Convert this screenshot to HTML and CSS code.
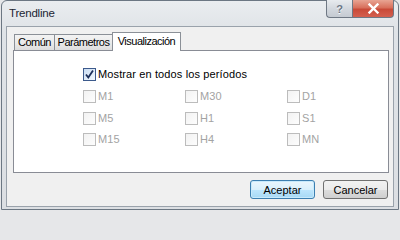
FILE: index.html
```html
<!DOCTYPE html>
<html lang="es">
<head>
<meta charset="utf-8">
<title>Trendline</title>
<link rel="stylesheet" href="styles.css">
</head>
<body>
<div class="window">
  <div class="titlebar">
    <span class="title">Trendline</span>
    <div class="caption-btns">
      <div class="cap-btn help">?</div>
      <div class="cap-btn close">
        <svg width="13" height="11" viewBox="0 0 13 11"><path d="M2.5 1.5 L10.5 9.5 M10.5 1.5 L2.5 9.5" stroke="#ffffff" stroke-width="2.4" stroke-linecap="square" fill="none"/></svg>
      </div>
    </div>
  </div>
  <div class="client">
    <div class="tabs">
      <div class="tab tab-comun">Común</div>
      <div class="tab tab-params">Parámetros</div>
      <div class="tab tab-active">Visualización</div>
    </div>
    <div class="panel">
      <label class="check-row">
        <span class="box checked">
          <svg width="11" height="11" viewBox="0 0 11 11"><path d="M2 5.5 L4.3 8.5 L9 1.5" stroke="#1c2f5a" stroke-width="1.8" fill="none"/></svg>
        </span>
        <span class="label">Mostrar en todos los períodos</span>
      </label>
      <div class="grid">
        <div class="check-row disabled"><span class="box"></span><span class="label">M1</span></div>
        <div class="check-row disabled"><span class="box"></span><span class="label">M30</span></div>
        <div class="check-row disabled"><span class="box"></span><span class="label">D1</span></div>
        <div class="check-row disabled"><span class="box"></span><span class="label">M5</span></div>
        <div class="check-row disabled"><span class="box"></span><span class="label">H1</span></div>
        <div class="check-row disabled"><span class="box"></span><span class="label">S1</span></div>
        <div class="check-row disabled"><span class="box"></span><span class="label">M15</span></div>
        <div class="check-row disabled"><span class="box"></span><span class="label">H4</span></div>
        <div class="check-row disabled"><span class="box"></span><span class="label">MN</span></div>
      </div>
    </div>
    <div class="buttons">
      <button class="btn btn-default">Aceptar</button>
      <button class="btn">Cancelar</button>
    </div>
  </div>
</div>
</body>
</html>
```

FILE: styles.css
```css
html, body {
  margin: 0;
  padding: 0;
  background: #e6e7e9;
}
body {
  width: 400px;
  height: 211px;
  font-family: "Liberation Sans", Arial, sans-serif;
  font-size: 11px;
  color: #000;
  overflow: hidden;
}
.window {
  box-sizing: border-box;
  width: 398px;
  height: 210px;
  margin-left: 1px;
  border: 1px solid #6c7783;
  border-radius: 6px 6px 0 0;
  background: linear-gradient(#eaedf0, #dfe3e7 30px, #dcdfe3);
  padding: 0 4px 2px 4px;
  display: flex;
  flex-direction: column;
}
.titlebar {
  height: 25px;
  display: flex;
  align-items: flex-start;
  justify-content: space-between;
}
.title {
  font-size: 11.5px;
  letter-spacing: -0.2px;
  color: #1b2533;
  margin-top: 6px;
  margin-left: 3px;
}
.caption-btns {
  display: flex;
  margin-top: -1px;
}
.cap-btn {
  box-sizing: border-box;
  height: 18px;
  border: 1px solid #6f7884;
  border-top: none;
  display: flex;
  align-items: center;
  justify-content: center;
}
.help {
  width: 26px;
  border-radius: 0 0 0 4px;
  border-right: none;
  background: linear-gradient(#e8ebee, #d3d8de 50%, #c5cbd2);
  color: #6a7584;
  font-weight: bold;
  font-size: 11px;
  text-shadow: 0 1px 0 #fff;
}
.close {
  width: 42px;
  border-radius: 0 0 4px 0;
  background: linear-gradient(#e8a493, #d8705c 45%, #c94a38 55%, #d4604f);
}
.client {
  box-sizing: border-box;
  height: 181px;
  border: 1px solid #9aa2ab;
  background: #f0f0f0;
  padding: 5px 4px 0 0;
  display: flex;
  flex-direction: column;
}
.tabs {
  display: flex;
  align-items: flex-end;
  height: 18px;
  margin-left: 7px;
  position: relative;
  z-index: 2;
}
.tab {
  box-sizing: border-box;
  height: 16px;
  border: 1px solid #8b9097;
  border-bottom: none;
  background: linear-gradient(#f3f3f3, #ebebeb 50%, #dddddd);
  line-height: 15px;
  letter-spacing: -0.5px;
  text-align: center;
  white-space: nowrap;
}
.tab + .tab {
  margin-left: -1px;
}
.tab-comun {
  width: 41px;
}
.tab-params {
  width: 59px;
}
.tab-active {
  width: 69px;
  height: 19px;
  margin-left: -2px;
  margin-bottom: -1px;
  background: #ffffff;
  line-height: 17px;
}
.panel {
  box-sizing: border-box;
  margin-left: 6px;
  width: 376px;
  height: 123px;
  border: 1px solid #898c95;
  background: #ffffff;
  padding: 17px 0 0 69px;
  position: relative;
  z-index: 1;
}
.check-row {
  display: flex;
  align-items: center;
  height: 13px;
}
.box {
  box-sizing: border-box;
  width: 13px;
  height: 13px;
  border: 1px solid #bcbcbc;
  background: linear-gradient(135deg, #f2f2f2, #fdfdfd);
  display: flex;
  align-items: center;
  justify-content: center;
  flex: none;
}
.box.checked {
  border-color: #3c5a8c;
  background: linear-gradient(135deg, #c9ddf3, #f3f8fd);
}
.label {
  margin-left: 2px;
  line-height: 13px;
  letter-spacing: 0.12px;
}
.disabled .label {
  color: #a3a3a3;
}
.grid {
  margin-top: 9px;
  display: grid;
  grid-template-columns: 102px 102px 102px;
  grid-auto-rows: 13px;
  row-gap: 8.5px;
}
.buttons {
  display: flex;
  justify-content: flex-end;
  gap: 8px;
  margin-top: 7px;
  padding-right: 1px;
}
.btn {
  box-sizing: border-box;
  width: 65px;
  height: 19px;
  font-family: "Liberation Sans", Arial, sans-serif;
  font-size: 11px;
  color: #000;
  border: 1px solid #707070;
  border-radius: 3px;
  background: linear-gradient(#f2f2f2, #ebebeb 50%, #dddddd 51%, #cfcfcf);
  padding: 0;
  line-height: 16px;
}
.btn-default {
  border-color: #3c7fb1;
  background: linear-gradient(#eaf6fd, #d9f0fc 50%, #bee6fd 51%, #a7d9f5);
  box-shadow: inset 0 0 0 1px #c8eafc;
}
```
